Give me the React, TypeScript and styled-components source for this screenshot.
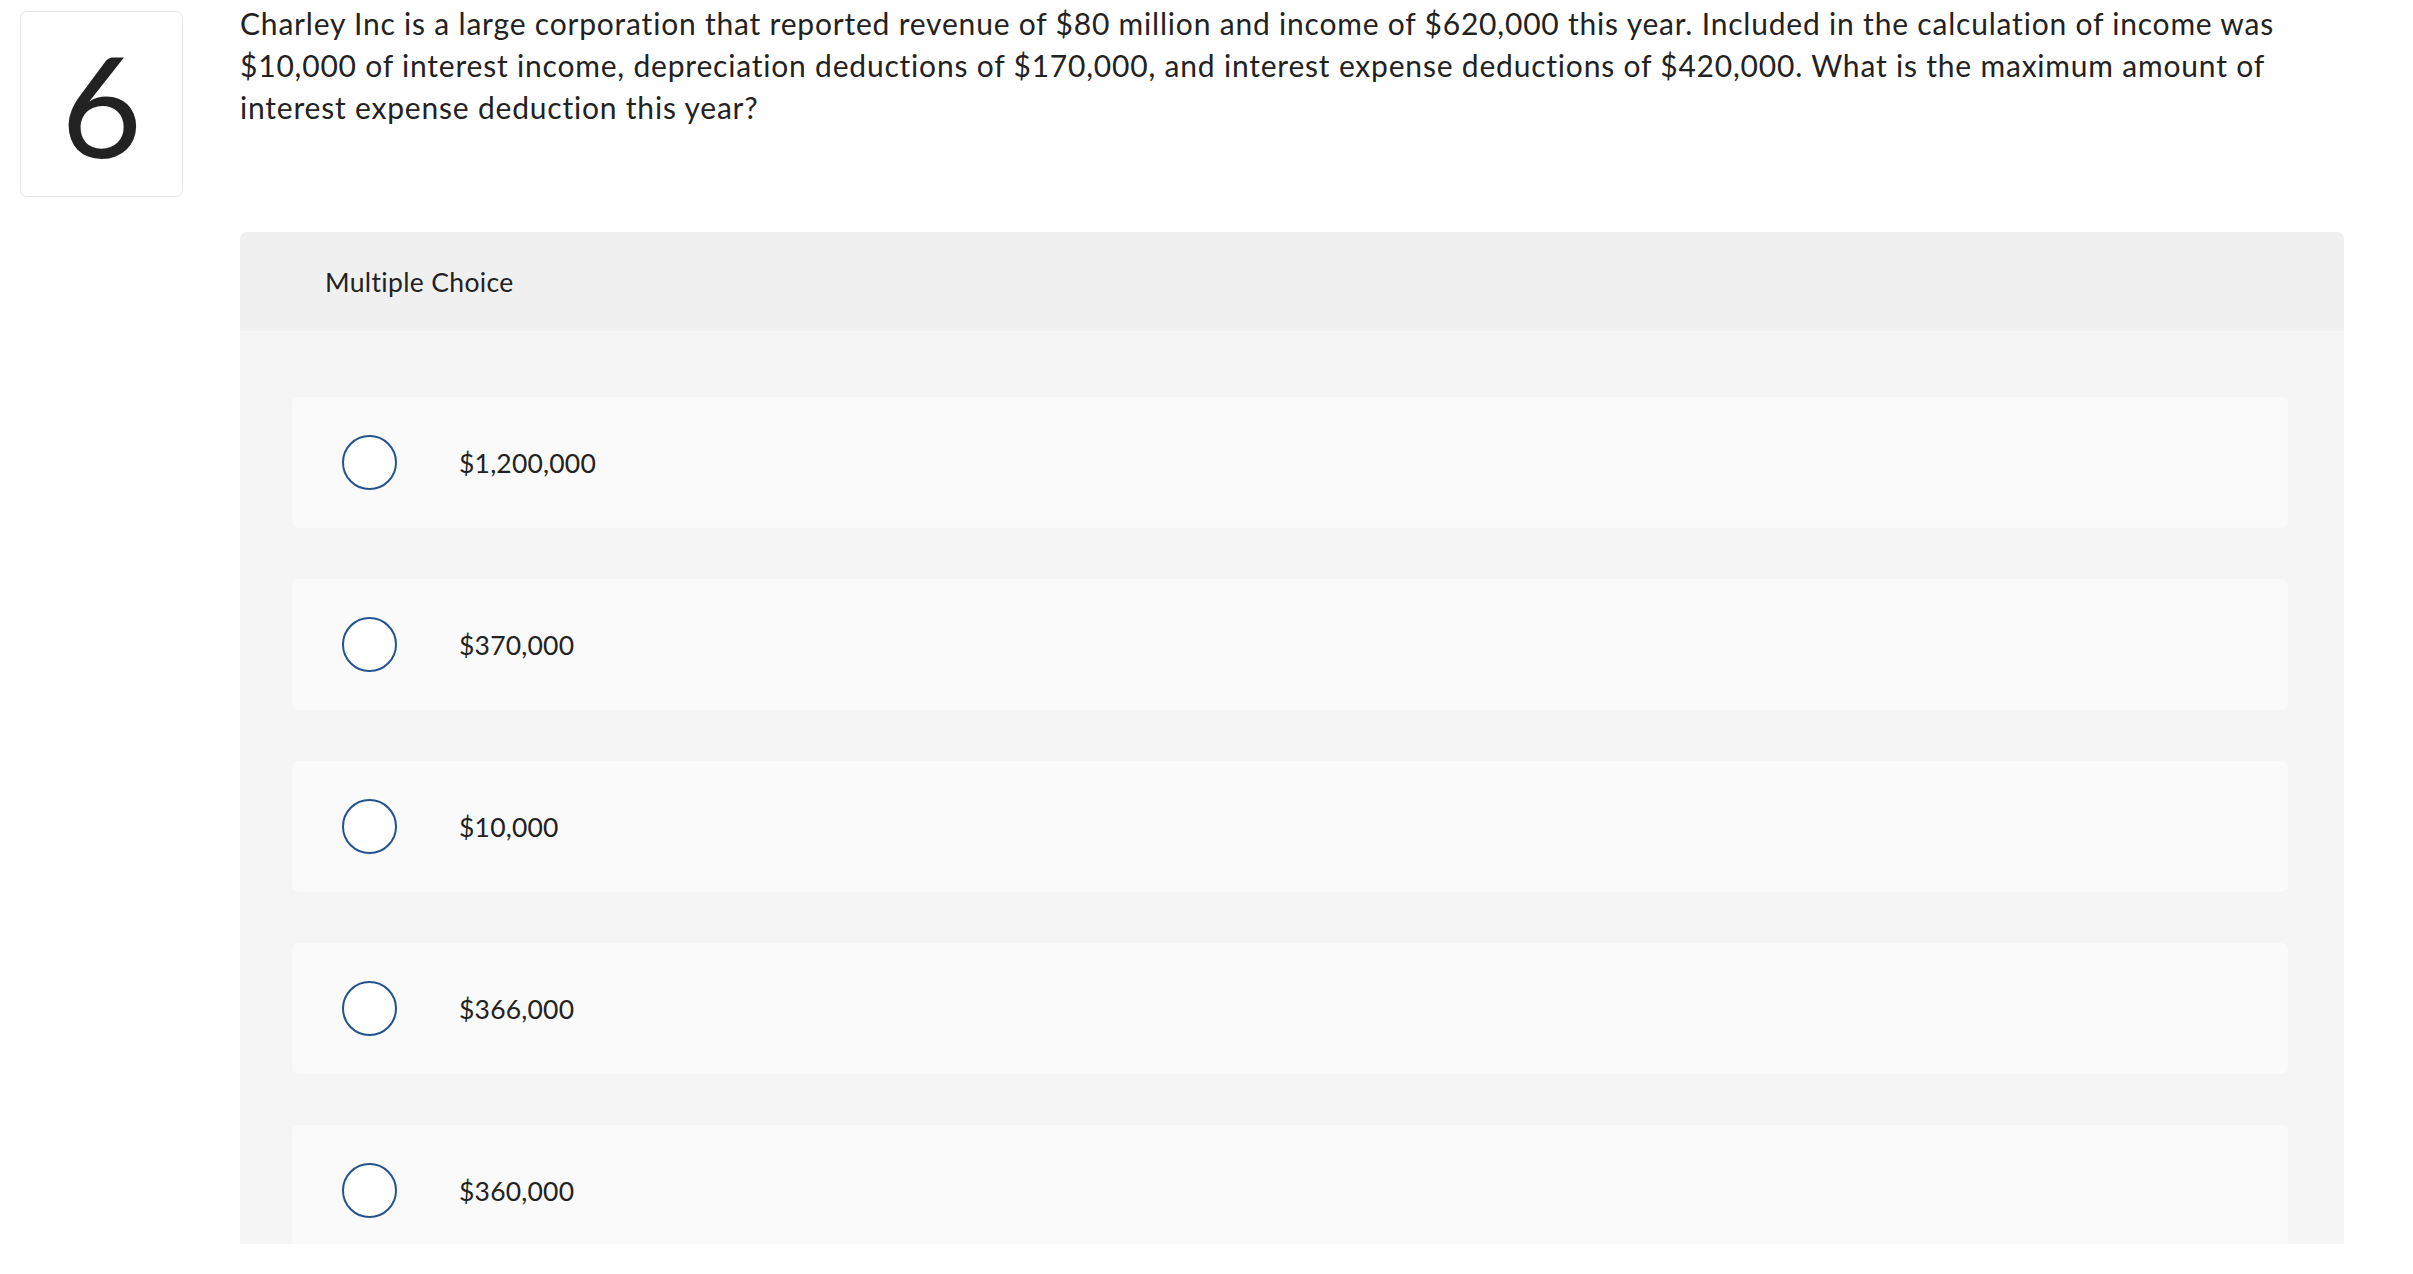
import React from "react";
import styled, { createGlobalStyle } from "styled-components";

const GlobalStyle = createGlobalStyle`
    body {
        margin: 0;
        background: #fff;
        font-family: Lato, "Open Sans", Arial, sans-serif;
        color: #222;
    }
`;

const Page = styled.div`
    width: 2413px;
    height: 1274px;
    overflow: hidden;
    padding: 0 0 0 20px;
    box-sizing: border-box;
`;

const QuestionRow = styled.div`
    display: flex;
    align-items: flex-start;
`;

const NumberBox = styled.div`
    flex: 0 0 auto;
    width: 163px;
    height: 186px;
    margin-top: 11px;
    box-sizing: border-box;
    border: 1px solid #e6e6e6;
    border-radius: 7px;
    display: flex;
    align-items: center;
    justify-content: center;
    font-size: 140px;
    font-weight: 400;
    color: #222;
`;

const Prompt = styled.p`
    margin: 2px 0 0 57px;
    width: 2104px;
    font-size: 30px;
    letter-spacing: 0.8px;
    line-height: 42px;
    color: #222;
`;

const Panel = styled.section`
    margin: 35px 0 0 220px;
    width: 2104px;
    height: 1012px;
    overflow: hidden;
    background: #f5f5f5;
    border-radius: 7px 7px 0 0;
`;

const PanelHeader = styled.header`
    height: 99px;
    background: #f0f0f0;
    display: flex;
    align-items: center;
    padding-left: 85px;
    font-size: 26.5px;
    letter-spacing: 0.35px;
    color: #222;
`;

const OptionList = styled.div`
    display: flex;
    flex-direction: column;
    gap: 51px;
    padding: 66px 56px 0 52px;
`;

const Option = styled.label`
    display: flex;
    align-items: center;
    height: 131px;
    flex: 0 0 auto;
    padding-left: 50px;
    background: #fafafa;
    border-radius: 7px;
    font-size: 26.5px;
    letter-spacing: 0.2px;
    color: #222;
    cursor: pointer;
`;

const Radio = styled.span`
    width: 55px;
    height: 55px;
    box-sizing: border-box;
    border: 2px solid #22538f;
    border-radius: 50%;
    background: #fff;
    margin-right: 62px;
`;

const choices = ["$1,200,000", "$370,000", "$10,000", "$366,000", "$360,000"];

export default function App() {
    return (
        <>
            <GlobalStyle />
            <Page>
                <QuestionRow>
                    <NumberBox>6</NumberBox>
                    <Prompt>
                        Charley Inc is a large corporation that reported revenue of $80 million and income of $620,000 this year. Included in the calculation of income was $10,000 of interest income, depreciation deductions of $170,000, and interest expense deductions of $420,000. What is the maximum amount of interest expense deduction this year?
                    </Prompt>
                </QuestionRow>
                <Panel>
                    <PanelHeader>Multiple Choice</PanelHeader>
                    <OptionList>
                        {choices.map((c, i) => (
                            <Option key={i}>
                                <Radio />
                                {c}
                            </Option>
                        ))}
                    </OptionList>
                </Panel>
            </Page>
        </>
    );
}
